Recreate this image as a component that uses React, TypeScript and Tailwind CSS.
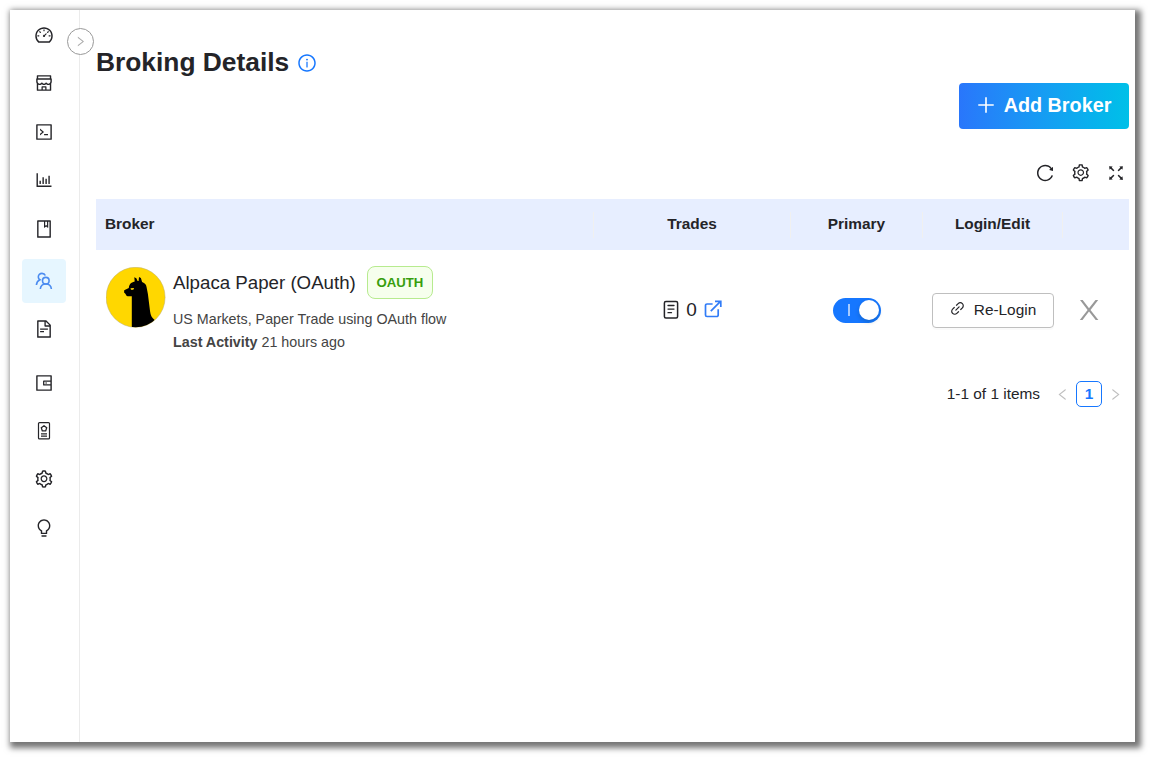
import React from "react";
import {
  AiOutlineDashboard, AiOutlineShop, AiOutlineCode, AiOutlineBarChart, AiOutlineBook,
  AiOutlineFileText, AiOutlineWallet, AiOutlineSetting, AiOutlineBulb, AiOutlineInfoCircle,
  AiOutlinePlus, AiOutlineReload, AiOutlineFullscreen, AiOutlineLink, AiOutlineLeft, AiOutlineRight,
} from "react-icons/ai";

function UsersIcon() {
  return (
    <svg width="18" height="18" viewBox="0 0 18 18" fill="none" stroke="currentColor" strokeWidth="1.6">
      <circle cx="10.800" cy="8.700" r="3.300" />
      <path d="M5.300 17c.3-3 2.600-5 5.500-5s5.300 2 5.600 5" />
      <path d="M10.300 3.500C9.800 2.200 8.500 1.400 7 1.400c-2.100 0-3.700 1.500-3.700 3.500 0 1.300.6 2.300 1.600 2.900C2.900 8.700 1.600 10.500 1.400 13" />
    </svg>
  );
}

function BadgeIcon() {
  return (
    <svg width="18" height="18" viewBox="0 0 18 18" fill="none" stroke="currentColor" strokeWidth="1.2">
      <rect x="3.500" y=".6" width="11" height="16.300" rx="1" />
      <path d="M9 3.800l2.700 2-1 3.100H7.300l-1-3.100z" strokeWidth="1.300" />
      <path d="M6 11.800h6M6 14.200h6" />
    </svg>
  );
}

function OrdersIcon() {
  return (
    <svg className="mb-px" width="16" height="20" viewBox="0 0 16 20" fill="none" stroke="#242428" strokeWidth="1.500" strokeLinecap="round">
      <rect x="1.400" y="1.500" width="13.200" height="16.600" rx="1.500" />
      <path d="M5 5.500h6M5 9.100h6M5 12.700h3.500" strokeWidth="1.300" />
    </svg>
  );
}

function ExternalIcon() {
  return (
    <svg className="mb-0.5" width="18" height="18" viewBox="0 0 18 18" fill="none" stroke="#317cf7" strokeWidth="1.700">
      <path d="M8.600 4H3a1.500 1.500 0 0 0-1.500 1.500V15A1.500 1.500 0 0 0 3 16.500h9.700a1.500 1.500 0 0 0 1.500-1.500V9.300" />
      <path d="M6.800 11.100L16.500 1.400M11 1.400h5.800v5.700" />
    </svg>
  );
}

function AlpacaLogo() {
  return (
    <svg className="mt-px shrink-0" width="60" height="61" viewBox="0 0 60 61">
      <clipPath id="disc"><ellipse cx="29.600" cy="30.300" rx="29.500" ry="30" /></clipPath>
      <ellipse cx="29.600" cy="30.300" rx="29.500" ry="30" fill="#ffd700" stroke="#b8ac70" strokeWidth=".5" />
      <g clipPath="url(#disc)">
        <path d="M28.300 10.300l2 1 1.300 2.700 1-.1.400-4 1.900 1 1.200 4c2.800 1.200 4.200 2.700 4.500 5.300l1.300 6.800 2.200 17.500c.5 3.700 1.500 6.200 4.300 8.200V62H25.800V29.200l-4.300.1c-1.300-.6-1.700-1.700-1.900-2.400l-1.500-1.500.1-2.200 4.600-2.200c.3-3.700 1.900-5.600 5.900-6.600z" fill="#000" />
        <path d="M24.500 21.300l3.600-.3-.8 1.700-2.300.1z" fill="#ffd700" />
      </g>
    </svg>
  );
}

const nav = [
  { icon: <AiOutlineDashboard />, style: "mt-[3px] h-11" },
  { icon: <AiOutlineShop />, style: "mt-1 h-11" },
  { icon: <AiOutlineCode />, style: "mt-[5px] h-11" },
  { icon: <AiOutlineBarChart />, style: "mt-1 h-11" },
  { icon: <AiOutlineBook />, style: "mt-[5px] h-11" },
  { icon: <UsersIcon />, style: "mt-2 h-11 rounded bg-[#e6f6ff] text-[#4c8cf0]" },
  { icon: <AiOutlineFileText />, style: "mt-1 h-11" },
  { icon: <AiOutlineWallet />, style: "mt-[10px] h-11" },
  { icon: <BadgeIcon />, style: "mt-1 h-11" },
  { icon: <AiOutlineSetting />, style: "mt-1 h-11" },
  { icon: <AiOutlineBulb />, style: "mt-[5px] h-11" },
];

const columns = ["Trades", "Primary", "Login/Edit"];

export default function App() {
  return (
    <div className="h-[758px] w-[1151px] overflow-hidden bg-white p-[10px] font-['Liberation_Sans',sans-serif] text-[#242428]">
      <div className="flex h-[732px] w-[1125px] bg-white shadow-[3px_3px_6px_3px_#757575]">
        <aside className="relative w-[70px] shrink-0 border-r border-[#ebebeb] pl-3">
          <nav className="w-11 text-[20px]">
            {nav.map((item, i) => (
              <div key={i} className={`flex w-11 items-center justify-center pr-px ${item.style}`}>{item.icon}</div>
            ))}
          </nav>
          <button className="absolute top-[18px] left-[57px] flex size-[27px] items-center justify-center rounded-full border border-[#999] bg-white text-[13px] text-[#aaa]">
            <AiOutlineRight />
          </button>
        </aside>
        <main className="flex w-[1049px] shrink-0 flex-col pl-4">
          <header className="mt-9 flex h-8 items-center">
            <h1 className="text-[26.350px] leading-8 font-bold whitespace-nowrap">Broking Details</h1>
            <AiOutlineInfoCircle className="mt-px ml-2 size-5 text-[#1677ff]" />
          </header>
          <div className="mt-[5px] flex justify-end">
            <button className="flex h-[46px] w-[170px] items-center justify-center gap-2 rounded bg-linear-to-r from-[#2976fb] to-[#00c0e8] pr-0.5 text-[19.800px] font-bold whitespace-nowrap text-white">
              <AiOutlinePlus className="-mr-px mb-0.5 size-[22px]" />
              <span className="pb-px">Add Broker</span>
            </button>
          </div>
          <div className="mt-[34px] flex h-5 items-center justify-end gap-4 pr-[3px]">
            <AiOutlineReload className="size-5" />
            <AiOutlineSetting className="size-[19.500px]" />
            <AiOutlineFullscreen className="size-5" />
          </div>
          <section className="mt-4">
            <div className="grid h-[51px] grid-cols-[498px_197px_132px_140px_66px] items-center bg-[#e7eeff] text-[15.400px] font-bold">
              <div className="flex h-[26px] items-center border-r border-[#f0f0f0] pb-px pl-[9px]">Broker</div>
              {columns.map((name) => (
                <div key={name} className="flex h-[26px] items-center justify-center border-r border-[#f0f0f0] pb-px">{name}</div>
              ))}
              <div />
            </div>
            <div className="grid h-[120px] grid-cols-[498px_197px_132px_140px_66px] items-center">
              <div className="flex h-full pt-4 pl-[10px]">
                <AlpacaLogo />
                <div className="ml-[7px]">
                  <div className="flex h-[33px] items-center">
                    <span className="pt-px text-[18.700px]">Alpaca Paper (OAuth)</span>
                    <span className="ml-[11px] flex h-[33px] w-[66px] items-center justify-center rounded-lg border border-[#b7eb8f] bg-[#f6ffed] text-[13.200px] font-bold text-[#389e0d]">OAUTH</span>
                  </div>
                  <div className="mt-[9px] text-[14.300px] leading-[23px] text-[#444]">
                    <p>US Markets, Paper Trade using OAuth flow</p>
                    <p><b>Last Activity</b> 21 hours ago</p>
                  </div>
                </div>
              </div>
              <div className="flex items-center justify-center gap-[7px] text-[19px]">
                <OrdersIcon />
                <span>0</span>
                <ExternalIcon />
              </div>
              <div className="flex justify-center">
                <button className="flex h-[25px] w-12 items-center justify-between rounded-full bg-[#1677ff] pr-0.5 pl-[15px]">
                  <span className="h-3 w-0.5 bg-[#a5caff]" />
                  <span className="size-5 rounded-full bg-white shadow-[0_2px_4px_rgba(0,35,11,0.2)]" />
                </button>
              </div>
              <div className="flex justify-center">
                <button className="flex h-[35px] w-[122px] items-center justify-center gap-2 rounded border border-[#bfbfbf] pr-px pb-px text-[15.400px] shadow-[0_2px_0_rgba(0,0,0,0.02)]">
                  <AiOutlineLink className="mb-0.5 size-[17px]" />
                  <span>Re-Login</span>
                </button>
              </div>
              <svg className="ml-4" width="20" height="22" viewBox="0 0 20 22" fill="#999">
                <path d="M1 1h2.700L10 9.200 16.500 1h2.700l-7.700 9.900 7.900 10.100h-2.700L10 12.600 3.500 21H.8l7.800-10.100z" />
              </svg>
            </div>
          </section>
          <footer className="mt-[11px] flex h-[26px] items-center justify-end pr-[6px] text-[15.400px]">
            <span>1-1 of 1 items</span>
            <AiOutlineLeft className="ml-[15px] size-[15px] text-[#bfbfbf]" />
            <span className="mr-[6px] ml-[6px] flex size-[26px] items-center justify-center rounded-[5px] border border-[#1677ff] font-bold text-[#1677ff]">1</span>
            <AiOutlineRight className="size-[15px] text-[#bfbfbf]" />
          </footer>
        </main>
      </div>
    </div>
  );
}
